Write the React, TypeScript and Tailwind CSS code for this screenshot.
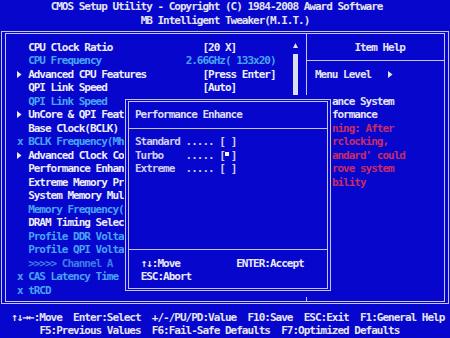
import type { ReactNode } from "react";

// 80x25 text screen scaled to 450x338: one cell = 5.625 x 13.5 px

type Row = {
  mark?: "arrow" | "x";
  label: string;
  value?: string;
  tone: "w" | "c" | "d";
  near?: boolean;
};

// rows under the popup are cut where the popup starts (column 22)
const rows: Row[] = [
  { label: "CPU Clock Ratio", value: "[20 X]", tone: "w" },
  { label: "CPU Frequency", value: "2.66GHz( 133x20)", tone: "c", near: true },
  { mark: "arrow", label: "Advanced CPU Features", value: "[Press Enter]", tone: "w" },
  { label: "QPI Link Speed", value: "[Auto]", tone: "w" },
  { label: "QPI Link Speed", tone: "c" },
  { mark: "arrow", label: "UnCore & QPI Feat", tone: "w" },
  { label: "Base Clock(BCLK)", tone: "w" },
  { mark: "x", label: "BCLK Frequency(Mh", tone: "c" },
  { mark: "arrow", label: "Advanced Clock Co", tone: "w" },
  { label: "Performance Enhan", tone: "w" },
  { label: "Extreme Memory Pr", tone: "w" },
  { label: "System Memory Mul", tone: "w" },
  { label: "Memory Frequency(", tone: "c" },
  { label: "DRAM Timing Selec", tone: "w" },
  { label: "Profile DDR Volta", tone: "c" },
  { label: "Profile QPI Volta", tone: "c" },
  { label: ">>>>> Channel A", tone: "d" },
  { mark: "x", label: "CAS Latency Time", tone: "c" },
  { mark: "x", label: "tRCD", tone: "c" },
];

const tones = {
  w: "text-[#ececfa]",
  c: "text-[#46a4f6]",
  d: "text-[#3a7ce6]",
};

function Tri() {
  return (
    <svg width="5" height="7" viewBox="0 0 5 7">
      <polygon points="0,0 4.5,3.5 0,7" fill="currentColor" />
    </svg>
  );
}

function Line() {
  return <div className="h-[1px] w-full bg-[#c4c4f4]" />;
}

function SepRow() {
  return (
    <div className="flex h-[13.5px] items-center">
      <Line />
    </div>
  );
}

function MenuRow({ r }: { r: Row }) {
  return (
    <div className={`flex h-[13.5px] ${tones[r.tone]}`}>
      <span className="flex w-[11.25px] shrink-0 items-center">
        {r.mark === "arrow" && <Tri />}
        {r.mark === "x" && "x"}
      </span>
      {r.value ? (
        <>
          <span className={`shrink-0 ${r.near ? "w-[157.5px]" : "w-[174.375px]"}`}>{r.label}</span>
          <span>{r.value}</span>
        </>
      ) : (
        <span>{r.label}</span>
      )}
    </div>
  );
}

function Option({ label, on }: { label: string; on?: boolean }) {
  return (
    <div className="h-[13.5px] pl-[6px] text-[#cfcff0]">
      {label} ..... [
      <span className="inline-flex h-[13.5px] w-[5.625px] items-center align-top">
        {on && <span className="mb-[3px] h-[4px] w-[4px] bg-[#f4f4ff]" />}
      </span>
      ]
    </div>
  );
}

function Help({ children, red }: { children: ReactNode; red?: boolean }) {
  return <div className={`h-[13.5px] pl-[24.875px] ${red ? "text-[#c92a68]" : "text-[#e4e4f4]"}`}>{children}</div>;
}

export default function App() {
  return (
    <div className="relative h-[338px] w-[450px] overflow-hidden whitespace-pre bg-[#0606cc] font-['DejaVu_Sans_Mono',monospace] text-[11px] font-bold leading-[13.5px] tracking-[-0.9976px] text-[#e4e4f2]">
      <header className="h-[27px]">
        <div className="pl-[50.625px]">CMOS Setup Utility - Copyright (C) 1984-2008 Award Software</div>
        <div className="pl-[140.625px]">MB Intelligent Tweaker(M.I.T.)</div>
      </header>

      <div className="h-[283.5px] pl-[1px] pt-[4px]">
        <div className="h-[273px] w-[448px] border border-[#c4c4f4] px-[3px] py-[1px]">
          <div className="flex h-full border border-[#c4c4f4]">
            <div className="flex w-[300px] shrink-0">
              <div className="w-[286.5px] shrink-0 pl-[10.875px] pt-[6.5px]">
                {rows.map((r, i) => (
                  <MenuRow key={i} r={r} />
                ))}
              </div>
              <div className="w-[5.625px] shrink-0 pt-[6.5px] text-[#e4e4f4]">
                <div className="flex h-[13.5px] items-center">
                  <svg width="5" height="5" viewBox="0 0 5 5" className="mb-[3px]">
                    <polygon points="2.5,0 5,5 0,5" fill="currentColor" />
                  </svg>
                </div>
                <div className="h-[40.5px] bg-[#dcdcf4]" />
              </div>
            </div>
            <div className="w-[1px] bg-[#c4c4f4]" />
            <div className="flex-1 pt-[6.5px]">
              <div className="h-[13.5px] pl-[47.375px]">Item Help</div>
              <SepRow />
              <div className="flex h-[13.5px] pl-[8px]">
                <span className="w-[73.125px]">Menu Level</span>
                <span className="flex items-center">
                  <Tri />
                </span>
              </div>
              <div className="h-[13.5px]" />
              <Help>ance System</Help>
              <Help>formance</Help>
              <Help red>ning: After</Help>
              <Help red>rclocking,</Help>
              <Help red>andard' could</Help>
              <Help red>rove system</Help>
              <Help red>bility</Help>
            </div>
          </div>
        </div>
      </div>

      <footer>
        <div className="h-[13.5px] pl-[11.25px]">
          ↑↓→←:Move  Enter:Select  +/-/PU/PD:Value  F10:Save  ESC:Exit  F1:General Help
        </div>
        <div className="h-[13.5px] pl-[39.375px]">F5:Previous Values  F6:Fail-Safe Defaults  F7:Optimized Defaults</div>
      </footer>

      {/* popup over the menu */}
      <div className="absolute left-[123.75px] top-[94.5px] h-[202.5px] w-[208.125px] bg-[#0606cc] pl-[1.25px] pt-[4.5px]">
        <div className="h-[192px] w-[206px] border border-[#c4c4f4] px-[2px] py-[1px]">
          <div className="flex h-full flex-col border border-[#c4c4f4] pt-[6px]">
            <div className="h-[13.5px] pl-[6px] text-[#dcdcf4]">Performance Enhance</div>
            <SepRow />
            <Option label="Standard" />
            <Option label="Turbo   " on />
            <Option label="Extreme " />
            <div className="h-[67.5px]" />
            <SepRow />
            <div className="flex h-[13.5px] pl-[11.625px] text-[#e8e8f6]">
              <span className="w-[95.625px]">↑↓:Move</span>
              <span>ENTER:Accept</span>
            </div>
            <div className="h-[13.5px] pl-[11.625px] text-[#e8e8f6]">ESC:Abort</div>
          </div>
        </div>
      </div>
    </div>
  );
}
